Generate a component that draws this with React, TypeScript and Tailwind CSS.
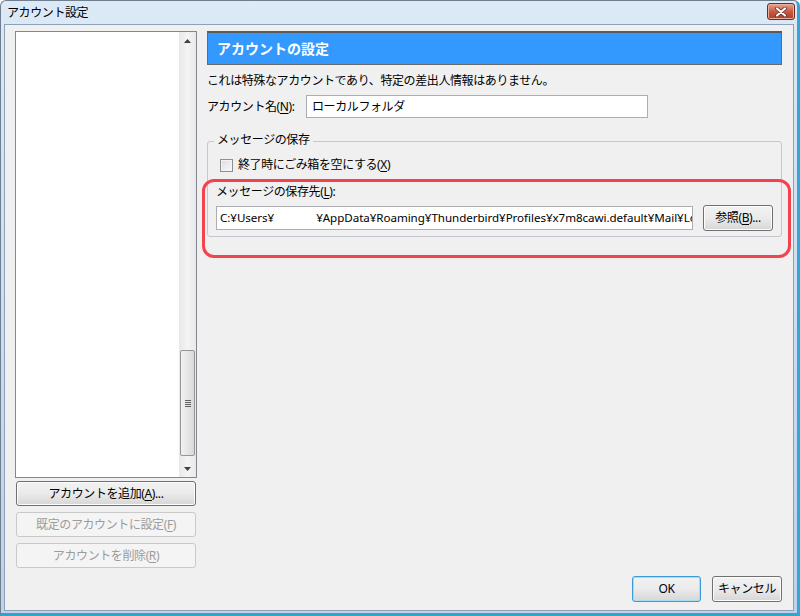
import React from 'react'

const JP = { fontFamily: '"Noto Sans", "Noto Sans CJK JP", sans-serif' }

function U({ k }: { k: string }) {
  return <span className="underline underline-offset-2">{k}</span>
}

function Btn({ children, className = '', disabled = false, primary = false }: { children: React.ReactNode; className?: string; disabled?: boolean; primary?: boolean }) {
  return (
    <div
      className={
        'flex items-center justify-center rounded-[3px] border text-[12px] ' +
        (disabled
          ? 'border-[#c9c9c9] bg-[#f4f4f4] text-[#9c9c9c]'
          : primary
          ? 'border-[#3c9ad8] bg-gradient-to-b from-[#f2f2f2] via-[#ebebeb] to-[#d6d6d6] text-black shadow-[inset_0_0_0_1px_#a6dcf6]'
          : 'border-[#707070] bg-gradient-to-b from-[#f2f2f2] via-[#ebebeb] to-[#d6d6d6] text-black shadow-[inset_0_0_0_1px_#fcfcfc]') +
        ' ' + className
      }
    >
      {children}
    </div>
  )
}

export default function App() {
  return (
    <div className="h-[616px] w-[800px] overflow-hidden" style={JP}>
      <div className="flex h-full w-full flex-col rounded-t-[6px] border border-r-[3px] border-b-[3px] border-[#6f7f8f] border-r-[#36a6d8] border-b-[#30a4cc] bg-gradient-to-b from-[#dce9f6] to-[#bcd3ea] px-[3px] pb-[2px]">
        {/* title bar */}
        <div className="flex h-[23px] shrink-0 items-center justify-between pl-[3px]">
          <span className="text-[12px] tracking-[-0.4px] text-black">アカウント設定</span>
          <div className="mr-[-1px] mt-[-2px] flex h-[17px] w-[28px] items-center justify-center rounded-[3px] border border-[#6b2a22] bg-gradient-to-b from-[#e8a493] via-[#c75a45] to-[#b73a22] shadow-[inset_0_0_0_1px_#e9b0a2]">
            <svg width="12" height="10" viewBox="0 0 12 10">
              <path d="M2 1.5 L10 8.5 M10 1.5 L2 8.5" stroke="#5b2a22" strokeWidth="3.6" strokeLinecap="round" />
              <path d="M2 1.5 L10 8.5 M10 1.5 L2 8.5" stroke="#ffffff" strokeWidth="2.2" strokeLinecap="round" />
            </svg>
          </div>
        </div>

        {/* client */}
        <div className="flex flex-1 gap-[10px] border border-[#8da2b8] bg-[#f0f0f0] pb-[8px] pl-[10px] pr-[11px] pt-[6px] text-[12px] tracking-[-0.4px] text-black">
          {/* left */}
          <div className="flex w-[183px] flex-col">
            <div className="flex h-[447px] border border-[#828790] bg-white">
              <div className="flex-1" />
              <div className="flex w-[17px] flex-col bg-gradient-to-r from-[#e8e8e8] via-[#f4f4f4] to-[#e8e8e8]">
                <div className="flex h-[17px] items-center justify-center">
                  <svg width="7" height="4" viewBox="0 0 7 4"><path d="M0 4 L3.5 0 L7 4 Z" fill="#404040" /></svg>
                </div>
                <div className="flex flex-1 flex-col justify-end px-[1px] pb-[4px]">
                  <div className="flex h-[106px] items-center justify-center rounded-[2px] border border-[#979797] bg-gradient-to-r from-[#f2f2f2] via-[#e6e6e6] to-[#d8d8d8]">
                    <div className="flex flex-col gap-[1px]">
                      <div className="h-px w-[6px] bg-[#606060]" />
                      <div className="h-px w-[6px] bg-[#606060]" />
                      <div className="h-px w-[6px] bg-[#606060]" />
                      <div className="h-px w-[6px] bg-[#606060]" />
                    </div>
                  </div>
                </div>
                <div className="flex h-[17px] items-center justify-center">
                  <svg width="7" height="4" viewBox="0 0 7 4"><path d="M0 0 L3.5 4 L7 0 Z" fill="#404040" /></svg>
                </div>
              </div>
            </div>
            <div className="mt-[3px] flex flex-col gap-[6px] px-[1px]">
              <Btn className="h-[25px]">アカウントを追加(<U k="A" />)...</Btn>
              <Btn className="h-[25px]" disabled>既定のアカウントに設定(<U k="F" />)</Btn>
              <Btn className="h-[25px]" disabled>アカウントを削除(<U k="R" />)</Btn>
            </div>
          </div>

          {/* right */}
          <div className="relative flex flex-1 flex-col">
            <div className="flex h-[34px] items-center border border-[#6a6a6a] border-t-2 border-t-[#5a5a5a] bg-[#3399ff] pl-[9px] text-[14px] font-bold tracking-[0px] text-white">
              アカウントの設定
            </div>
            <div className="mt-[8px] leading-[16px]">これは特殊なアカウントであり、特定の差出人情報はありません。</div>
            <div className="mt-[6px] flex items-center">
              <span className="w-[99px]">アカウント名(<U k="N" />):</span>
              <div className="flex h-[23px] w-[342px] items-center border border-[#abadb3] bg-white pl-[5px]">ローカルフォルダ</div>
            </div>

            <div className="relative mt-[23px] h-[96px] rounded-[3px] border border-[#c2c8cd] px-[8px] pt-[14px]">
              <div className="absolute left-[6px] top-[-10px] bg-[#f0f0f0] px-[3px] leading-[16px]">メッセージの保存</div>
              <div className="flex items-center gap-[5px] pl-[4px]">
                <div className="h-[13px] w-[13px] border border-[#8e8f8f] bg-gradient-to-br from-[#dcdcdc] to-[#fbfbfb] shadow-[inset_0_0_0_1px_#f4f4f4]" />
                <span>終了時にごみ箱を空にする(<U k="X" />)</span>
              </div>
              <div className="mt-[10px] leading-[16px]">メッセージの保存先(<U k="L" />):</div>
              <div className="mt-[5px] flex items-center gap-[10px]">
                <div className="flex h-[24px] w-[477px] shrink-0 items-center overflow-hidden whitespace-nowrap border border-[#abadb3] bg-white pl-[3px] text-[11.6px] tracking-[-0.05px]">
                  <span className="shrink-0">C:¥Users¥</span>
                  <span className="inline-block w-[42px] shrink-0" />
                  <span className="shrink-0">¥AppData¥Roaming¥Thunderbird¥Profiles¥x7m8cawi.default¥Mail¥Lo</span>
                </div>
                <Btn className="h-[26px] w-[70px]">参照(<U k="B" />)...</Btn>
              </div>
            </div>

            <div className="flex-1" />
            <div className="flex justify-end gap-[11px]">
              <Btn primary className="h-[26px] w-[69px]">OK</Btn>
              <Btn className="h-[26px] w-[70px]">キャンセル</Btn>
            </div>

            {/* highlight annotation */}
            <div className="pointer-events-none absolute left-[-5px] right-[-9px] top-[148px] h-[79px] rounded-[12px] border-[3px] border-[#f2434f]" />
          </div>
        </div>
      </div>
    </div>
  )
}
